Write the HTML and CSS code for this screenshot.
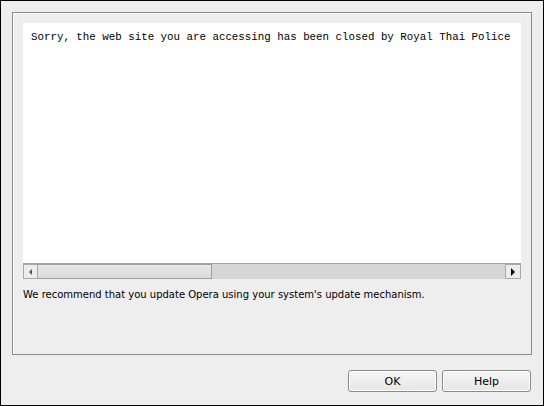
FILE: index.html
```html
<!DOCTYPE html>
<html lang="en">
<head>
    <meta charset="UTF-8">
    <title>Opera</title>
    <link rel="stylesheet" href="styles.css">
</head>
<body>
    <div class="window">
        <div class="group">
            <div class="view">
                <pre class="page-text">Sorry, the web site you are accessing has been closed by Royal Thai Police</pre>
            </div>
            <div class="hscroll">
                <div class="sb-btn sb-left"><span class="arrow-left"></span></div>
                <div class="sb-thumb"></div>
                <div class="sb-track"></div>
                <div class="sb-btn sb-right"><span class="arrow-right"></span></div>
            </div>
            <p class="note">We recommend that you update Opera using your system's update mechanism.</p>
        </div>
        <div class="buttons">
            <button class="btn">OK</button>
            <button class="btn">Help</button>
        </div>
    </div>
</body>
</html>
```

FILE: styles.css
```css
body {
    margin: 0;
    padding: 0;
    background-color: #eeeeee;
    font-family: "DejaVu Sans", "Liberation Sans", sans-serif;
}
.window {
    width: 544px;
    height: 406px;
    box-sizing: border-box;
    border: 1px solid #000;
    background-color: #eeeeee;
    padding: 11px;
}
.group {
    height: 343px;
    box-sizing: border-box;
    border: 1px solid #8c8c8c;
    box-shadow: inset 1px 1px 0 #ffffff;
    padding: 10px;
}
.view {
    height: 240px;
    background-color: #fff;
    overflow: hidden;
}
.page-text {
    margin: 0;
    padding: 8px 0 0 8px;
    font-family: "Liberation Mono", monospace;
    font-size: 10.8px;
    line-height: 13px;
    color: #000;
    white-space: pre;
}
.hscroll {
    display: flex;
    height: 15px;
    border-top: 1px solid #a0a0a0;
    background-color: #dadada;
}
.sb-btn {
    width: 13px;
    box-sizing: border-box;
    border: 1px solid #a8a8a8;
    background-color: #ececec;
    display: flex;
    align-items: center;
    justify-content: center;
}
.sb-left {
    width: 15px;
}
.sb-right {
    width: 16px;
}
.arrow-left {
    width: 0;
    height: 0;
    border-top: 3px solid transparent;
    border-bottom: 3px solid transparent;
    border-right: 3px solid #555;
}
.arrow-right {
    width: 0;
    height: 0;
    border-top: 4px solid transparent;
    border-bottom: 4px solid transparent;
    border-left: 4px solid #000;
}
.sb-thumb {
    width: 174px;
    box-sizing: border-box;
    border: 1px solid #a0a0a0;
    border-left: none;
    background: linear-gradient(#e6e6e6, #dcdcdc);
}
.sb-track {
    flex: 1;
    background-color: #d6d6d6;
}
.note {
    margin: 10px 0 0 0;
    font-size: 10px;
    color: #000;
}
.buttons {
    display: flex;
    justify-content: flex-end;
    gap: 5px;
    margin-top: 15px;
    margin-right: 1px;
}
.btn {
    width: 89px;
    height: 22px;
    border: 1px solid #8a8a8a;
    border-radius: 3px;
    background: linear-gradient(#f6f6f6, #e6e6e6);
    box-shadow: inset 0 0 0 1px #ffffff;
    font-family: "DejaVu Sans", sans-serif;
    font-size: 11px;
    color: #000;
    padding: 0;
}
```
